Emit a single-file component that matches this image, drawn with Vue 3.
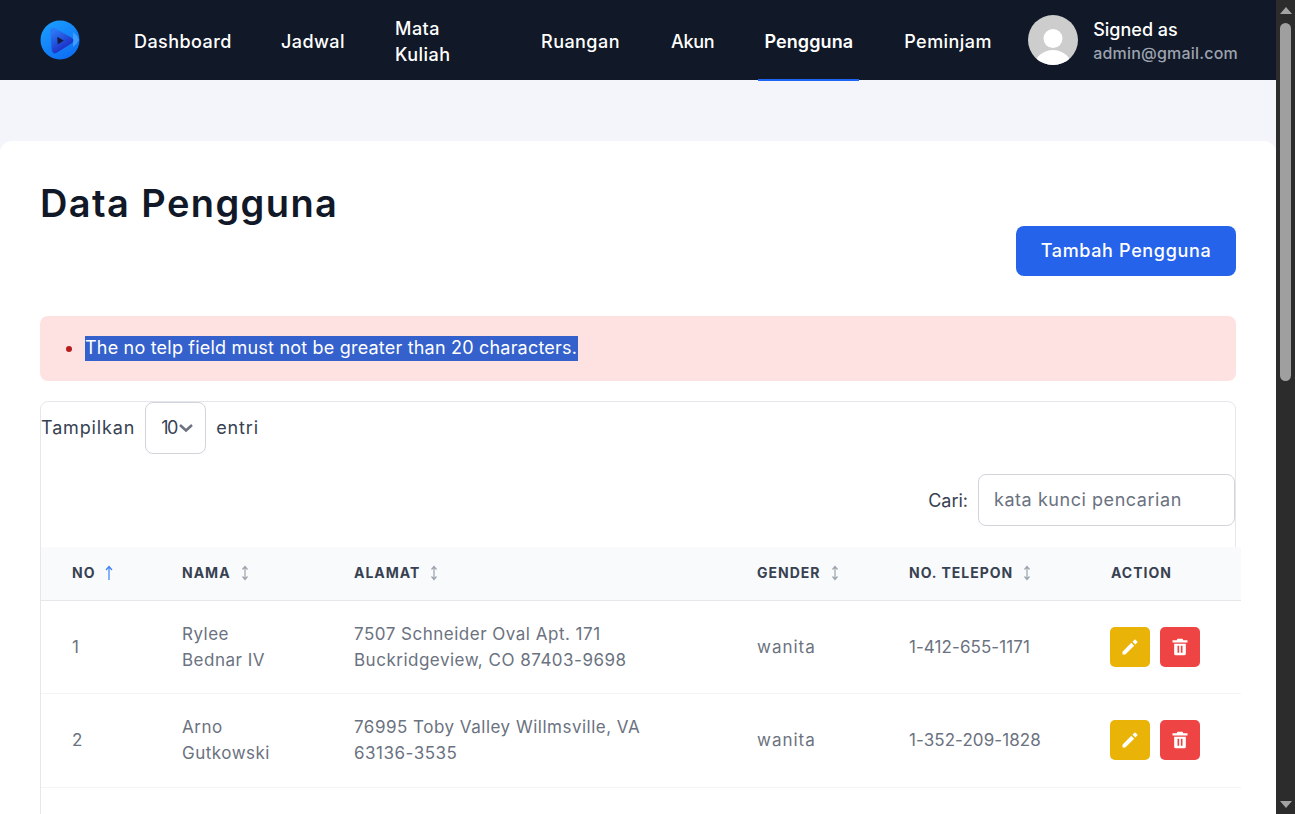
<script setup>
const nav = [
  { label: 'Dashboard', cls: 'w-dash' },
  { label: 'Jadwal', cls: 'w-jadwal' },
  { label: 'Mata Kuliah', cls: 'w-mata' },
  { label: 'Ruangan', cls: 'w-ruang' },
  { label: 'Akun', cls: 'w-akun' },
  { label: 'Pengguna', cls: 'w-user', active: true },
  { label: 'Peminjam', cls: 'w-pinjam' }
]
const cols = [
  { label: 'NO', cls: 'c-no', sort: 'up' },
  { label: 'NAMA', cls: 'c-nama', sort: 'both' },
  { label: 'ALAMAT', cls: 'c-alamat', sort: 'both' },
  { label: 'GENDER', cls: 'c-gender', sort: 'both' },
  { label: 'NO. TELEPON', cls: 'c-telp', sort: 'both' },
  { label: 'ACTION', cls: 'c-action', sort: '' }
]
const rows = [
  { no: 1, nama: ['Rylee', 'Bednar IV'], alamat: ['7507 Schneider Oval Apt. 171', 'Buckridgeview, CO 87403-9698'], gender: 'wanita', telp: '1-412-655-1171' },
  { no: 2, nama: ['Arno', 'Gutkowski'], alamat: ['76995 Toby Valley Willmsville, VA', '63136-3535'], gender: 'wanita', telp: '1-352-209-1828' }
]
</script>

<template>
  <div class="screen">
    <div class="viewport">
      <header class="topbar">
        <svg class="logo" viewBox="0 0 40 40" aria-hidden="true">
          <defs>
            <linearGradient id="lg1" x1="0.2" y1="0" x2="0.8" y2="1">
              <stop offset="0" stop-color="#1a9dff" />
              <stop offset="1" stop-color="#0d6cf2" />
            </linearGradient>
            <linearGradient id="lg2" x1="0" y1="0" x2="0.6" y2="1">
              <stop offset="0" stop-color="#2b78f5" />
              <stop offset="1" stop-color="#1d2fc4" />
            </linearGradient>
          </defs>
          <circle cx="20" cy="20" r="19.5" fill="url(#lg1)" />
          <path d="M33 12 A16 16 0 0 1 39 20 A19 19 0 0 1 33 27 Z" fill="#3a9dff" />
          <path d="M13.5 11 L30 20.5 L15 30 Z" fill="#101a44" stroke="url(#lg2)" stroke-width="6.5" stroke-linejoin="round" />
        </svg>
        <nav class="menu">
          <a v-for="item in nav" :key="item.label" class="menu-item" :class="[item.cls, { active: item.active }]">{{ item.label }}</a>
        </nav>
        <div class="profile">
          <svg class="avatar" viewBox="0 0 50 50" aria-hidden="true">
            <defs><clipPath id="av"><circle cx="25" cy="25" r="25" /></clipPath></defs>
            <circle cx="25" cy="25" r="25" fill="#cdcdcd" />
            <circle cx="25" cy="23.5" r="9.5" fill="#fff" />
            <ellipse cx="25" cy="50" rx="18" ry="15" fill="#fff" clip-path="url(#av)" />
          </svg>
          <div class="who">
            <div class="who-a">Signed as</div>
            <div class="who-b">admin@gmail.com</div>
          </div>
        </div>
      </header>

      <main class="page">
        <section class="card">
          <div class="head-row">
            <h1 class="title">Data Pengguna</h1>
            <button class="add-btn" type="button">Tambah Pengguna</button>
          </div>

          <div class="alert">
            <span class="dot"></span>
            <span class="sel">The no telp field must not be greater than 20 characters.</span>
          </div>

          <div class="data-box">
            <div class="len-row">
              <span>Tampilkan</span>
              <div class="select">
                <span>10</span>
                <svg class="chev" viewBox="0 0 16 16" aria-hidden="true"><path d="M2 5 L8 10.5 L14 5" fill="none" stroke="#6b7280" stroke-width="2.5" /></svg>
              </div>
              <span>entri</span>
            </div>
            <div class="search-row">
              <span>Cari:</span>
              <div class="search">kata kunci pencarian</div>
            </div>
            <table class="table">
              <colgroup>
                <col class="c1" /><col class="c2" /><col class="c3" /><col class="c4" /><col class="c5" /><col class="c6" />
              </colgroup>
              <thead>
                <tr>
                  <th v-for="c in cols" :key="c.label" :class="c.cls">
                    <span class="th-text">{{ c.label }}</span>
                    <svg v-if="c.sort === 'up'" class="sort" viewBox="0 0 10 16" aria-hidden="true"><path d="M5 15 V2 M2 5 L5 1.5 L8 5" fill="none" stroke="#3b82f6" stroke-width="1.2" /></svg>
                    <svg v-else-if="c.sort === 'both'" class="sort" viewBox="0 0 10 16" aria-hidden="true"><path d="M5 2 V14 M2.5 4.5 L5 1.5 L7.5 4.5 M2.5 11.5 L5 14.5 L7.5 11.5" fill="none" stroke="#9ca3af" stroke-width="1.2" /></svg>
                  </th>
                </tr>
              </thead>
              <tbody>
                <tr v-for="r in rows" :key="r.no">
                  <td>{{ r.no }}</td>
                  <td class="t-name"><div v-for="n in r.nama" :key="n">{{ n }}</div></td>
                  <td class="t-addr"><div v-for="a in r.alamat" :key="a">{{ a }}</div></td>
                  <td class="t-gender">{{ r.gender }}</td>
                  <td class="t-phone">{{ r.telp }}</td>
                  <td>
                    <div class="actions">
                      <button class="act edit" type="button" aria-label="edit">
                        <svg viewBox="0 0 24 24"><path fill="#fff" d="M3 17.6V21h3.4L17 10.4 13.6 7 3 17.6z" /><path fill="#fff" d="M15 5.6 18.4 9l2.3-2.3a1 1 0 0 0 0-1.4l-2-2a1 1 0 0 0-1.4 0L15 5.6z" /></svg>
                      </button>
                      <button class="act del" type="button" aria-label="hapus">
                        <svg viewBox="0 0 24 24"><path fill="#fff" fill-rule="evenodd" d="M9 2h6l1 2h5v2.5H3V4h5l1-2zM5 8h14v12a2 2 0 0 1-2 2H7a2 2 0 0 1-2-2V8zm4 2.5V19h2v-8.5H9zm4 0V19h2v-8.5h-2z" /></svg>
                      </button>
                    </div>
                  </td>
                </tr>
                <tr class="last"><td colspan="6"></td></tr>
              </tbody>
            </table>
          </div>
        </section>
      </main>
    </div>

    <aside class="scrollbar" aria-hidden="true">
      <svg class="arrow" viewBox="0 0 12 8"><path d="M6 1 L12 8 H0 Z" fill="#a3a3a3" /></svg>
      <div class="thumb"></div>
      <div class="spacer"></div>
      <svg class="arrow" viewBox="0 0 12 8"><path d="M0 0 H12 L6 7 Z" fill="#a3a3a3" /></svg>
    </aside>
  </div>
</template>

<style>
html, body { margin: 0; padding: 0; overflow: hidden; background: #f4f5fa; }
</style>

<style scoped>
* { box-sizing: border-box; }
.screen {
  display: flex;
  width: 1295px;
  height: 814px;
  overflow: hidden;
  font-family: "Inter", "Open Sans", sans-serif;
  color: #374151;
}
.viewport { width: 1276px; height: 814px; overflow: hidden; flex: none; background: #f4f5fa; }

.topbar {
  height: 80px;
  background: #111827;
  display: flex;
  align-items: center;
  padding: 0 38px 0 40px;
}
.logo { width: 40px; height: 40px; flex: none; }
.menu { display: flex; align-items: center; height: 80px; margin-left: 49px; }
.menu-item {
  position: relative;
  display: flex;
  align-items: center;
  height: 80px;
  padding: 3px 5px 0;
  margin-right: 40px;
  color: #fff;
  font-size: 18px;
  font-weight: 500;
  line-height: 26px;
  letter-spacing: 0.45px;
}
.w-dash { margin-right: 39px; }
.w-mata { width: 106px; padding-top: 4px; }
.w-ruang { margin-right: 41px; }
.w-akun { letter-spacing: -0.25px; margin-right: 39px; }
.w-pinjam { margin-right: 0; }
.menu-item.active { font-weight: 600; padding: 3px 6px 0; letter-spacing: 0.1px; margin-right: 40px; }
.menu-item.active::after {
  content: "";
  position: absolute;
  left: 0;
  right: 0;
  bottom: -1px;
  height: 2px;
  background: #1d66f5;
}
.profile { display: flex; align-items: center; gap: 15px; margin-left: auto; }
.avatar { width: 50px; height: 50px; flex: none; }
.who { padding-top: 2px; }
.who-a { color: #fff; font-size: 18px; line-height: 24px; font-weight: 500; }
.who-b { color: #9ca3af; font-size: 16px; line-height: 22px; font-weight: 500; letter-spacing: 0.2px; }

.page { padding-top: 61px; }
.card { background: #fff; border-radius: 12px 12px 0 0; padding: 40px; height: 700px; }
.head-row { display: flex; justify-content: space-between; align-items: flex-end; height: 95px; }
.title {
  margin: 0;
  align-self: flex-start;
  font-size: 38px;
  line-height: 44px;
  font-weight: 600;
  letter-spacing: 1.4px;
  color: #111827;
}
.add-btn {
  width: 220px;
  height: 50px;
  border: 0;
  border-radius: 8px;
  background: #2563eb;
  color: #fff;
  font: 500 18px/26px "Inter", sans-serif;
  letter-spacing: 0.65px;
}
.alert {
  margin-top: 40px;
  height: 65px;
  border-radius: 8px;
  background: #fee2e2;
  display: flex;
  align-items: center;
  padding-left: 26px;
}
.dot { width: 6px; height: 6px; border-radius: 50%; background: #b91c1c; margin-right: 13px; }
.sel {
  display: block;
  width: 493px;
  height: 25px;
  background: #3461cc;
  color: #fff;
  font-size: 18px;
  line-height: 24px;
  letter-spacing: 0.2px;
  white-space: nowrap;
  overflow: hidden;
}
.data-box {
  margin-top: 20px;
  height: 470px;
  border: 1px solid #e5e7eb;
  border-radius: 8px 8px 0 0;
}
.len-row { display: flex; align-items: center; gap: 10px; height: 52px; font-size: 18px; letter-spacing: 0.85px; color: #374151; padding-bottom: 1px; }
.select {
  width: 61px;
  height: 52px;
  margin-bottom: -1px;
  border: 1px solid #d1d5db;
  border-radius: 8px;
  display: flex;
  align-items: center;
  padding: 0 0 1px 15px;
  font-size: 18px;
  letter-spacing: -1.4px;
}
.chev { width: 16px; height: 16px; flex: none; margin-left: 1px; }
.search-row {
  display: flex;
  justify-content: flex-end;
  align-items: center;
  gap: 10px;
  margin-top: 20px;
  font-size: 18px;
  color: #374151;
}
.search {
  width: 257px;
  height: 52px;
  border: 1px solid #d1d5db;
  border-radius: 8px;
  display: flex;
  align-items: center;
  padding: 0 0 1px 15px;
  color: #6b7280;
  font-size: 18px;
  letter-spacing: 0.55px;
}
.table {
  position: relative;
  margin-top: 21px;
  width: 1200px;
  table-layout: fixed;
  border-collapse: collapse;
  background: #fff;
}
.c1 { width: 110px; }
.c2 { width: 172px; }
.c3 { width: 403px; }
.c4 { width: 152px; }
.c5 { width: 202px; }
.c6 { width: 161px; }
thead tr { background: #f9fafb; height: 53px; border-bottom: 1px solid #e5e7eb; }
th {
  padding: 0 0 3px 31px;
  text-align: left;
  font-size: 14px;
  font-weight: 700;
  letter-spacing: 1px;
  color: #374151;
  white-space: nowrap;
}
.th-text { vertical-align: middle; }
.sort { width: 10px; height: 16px; margin-left: 9px; vertical-align: middle; }
tbody tr { height: 93px; border-bottom: 1px solid #f3f4f6; }
tbody tr:nth-child(2) { height: 94px; }
tbody tr:nth-child(2) td { padding-bottom: 1px; }
td {
  padding: 0 0 0 31px;
  font-size: 17px;
  line-height: 26px;
  color: #6b7280;
  vertical-align: middle;
  white-space: nowrap;
}
.t-name { letter-spacing: 0.5px; }
.t-addr { letter-spacing: 0.5px; }
.t-gender { letter-spacing: 1px; }
.t-phone { letter-spacing: 0.07px; }
.last { height: 60px; border-bottom: 0; }
.actions { display: flex; gap: 10px; margin-left: -1px; }
.act {
  width: 40px;
  height: 40px;
  padding: 0;
  border: 0;
  border-radius: 5px;
  display: flex;
  align-items: center;
  justify-content: center;
}
.act svg { width: 20px; height: 20px; }
.edit { background: #eab308; }
.del { background: #ef4444; }

.scrollbar {
  width: 19px;
  height: 814px;
  flex: none;
  background: #2c2c2c;
  display: flex;
  flex-direction: column;
  align-items: center;
  padding: 6px 0 5px;
}
.arrow { width: 12px; height: 8px; flex: none; }
.thumb { width: 11px; height: 358px; margin-top: 9px; border-radius: 6px; background: #9f9f9f; flex: none; }
.spacer { flex: 1; }
</style>
